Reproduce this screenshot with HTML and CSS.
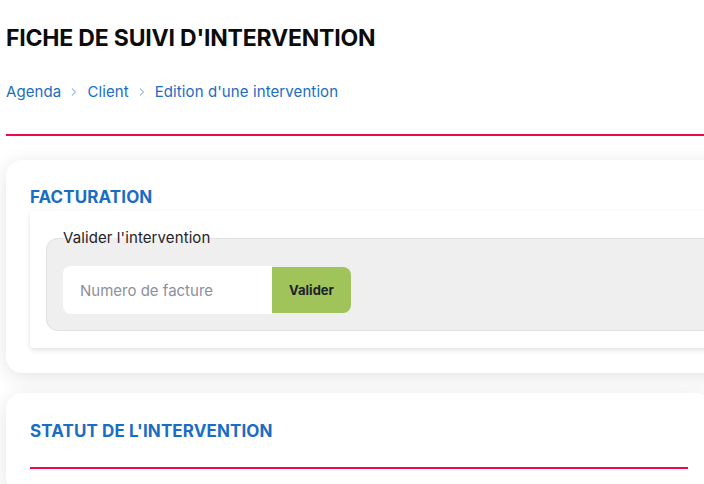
FILE: index.html
```html
<!DOCTYPE html>
<html lang="fr">
<head>
<meta charset="utf-8">
<title>Fiche de suivi d'intervention</title>
<link rel="stylesheet" href="styles.css">
</head>
<body>
<div class="page">
  <h1 class="title">FICHE DE SUIVI D'INTERVENTION</h1>
  <nav class="crumbs">
    <a class="crumb" href="#">Agenda</a>
    <span class="sep"><svg width="8" height="10" viewBox="0 0 8 10"><path d="M2 1.5 L5.5 5 L2 8.5" fill="none" stroke="#a9c4e4" stroke-width="1.3"/></svg></span>
    <a class="crumb" href="#">Client</a>
    <span class="sep"><svg width="8" height="10" viewBox="0 0 8 10"><path d="M2 1.5 L5.5 5 L2 8.5" fill="none" stroke="#a9c4e4" stroke-width="1.3"/></svg></span>
    <a class="crumb" href="#">Edition d'une intervention</a>
  </nav>
  <div class="rule"></div>

  <section class="card card-wide">
    <h2 class="card-title">FACTURATION</h2>
    <div class="panel">
      <fieldset class="group">
        <legend class="legend">Valider l'intervention</legend>
        <div class="field">
          <input class="input" type="text" placeholder="Numero de facture">
          <button class="btn" type="button">Valider</button>
        </div>
      </fieldset>
    </div>
  </section>

  <section class="card card-second">
    <h2 class="card-title">STATUT DE L'INTERVENTION</h2>
    <div class="card-rule"></div>
  </section>
</div>
</body>
</html>
```

FILE: styles.css
```css
html, body {
  margin: 0;
  padding: 0;
  background: #ffffff;
  overflow: hidden;
}
body {
  font-family: Inter, "Liberation Sans", Arial, sans-serif;
  color: #111;
}
.page {
  width: 706px;
  padding: 0 0 40px 6px;
}
.title {
  margin: 0;
  padding-top: 25px;
  font-size: 23px;
  line-height: 27px;
  font-weight: 700;
  color: #0c0c0c;
  letter-spacing: -0.2px;
}
.crumbs {
  display: flex;
  align-items: center;
  gap: 9px;
  margin-top: 30px;
  font-size: 15px;
  line-height: 20px;
  letter-spacing: 0.1px;
}
.crumb {
  color: #1a6dc4;
  text-decoration: none;
}
.sep {
  display: flex;
  align-items: center;
}
.rule {
  margin-top: 32px;
  height: 2px;
  width: 760px;
  background: #f0084e;
}
.card {
  margin-top: 24px;
  background: #fff;
  border-radius: 16px;
  box-shadow: 0 4px 20px rgba(0, 0, 0, 0.11);
  padding: 25px 24px 25px 24px;
  width: 658px;
}
.card-second {
  margin-top: 20px;
  padding-top: 26px;
}
.card-wide {
  width: 740px;
}
.card-title {
  margin: 0;
  font-size: 17px;
  line-height: 24px;
  font-weight: 700;
  color: #1a6dc4;
  letter-spacing: 0.1px;
}
.panel {
  margin-top: 2px;
  background: #fff;
  border-radius: 3px;
  box-shadow: 0 2px 5px rgba(0, 0, 0, 0.12);
  padding: 18px 16px 17px 16px;
}
.group {
  margin: 0;
  padding: 0 16px 16px 16px;
  background: #efefef;
  border: 1px solid #e1e1e1;
  border-radius: 12px;
}
.legend {
  padding: 0;
  font-size: 15px;
  line-height: 18px;
  color: #1f2329;
  letter-spacing: 0.1px;
}
.field {
  display: flex;
  align-items: center;
  margin-top: 19px;
}
.input {
  box-sizing: border-box;
  width: 209px;
  height: 48px;
  border: none;
  outline: none;
  border-radius: 8px 0 0 8px;
  background: #fff;
  padding: 0 17px;
  font-family: inherit;
  font-size: 15px;
  color: #222;
}
.input::placeholder {
  color: #8b909a;
}
.btn {
  box-sizing: border-box;
  width: 79px;
  height: 46px;
  border: none;
  border-radius: 0 8px 8px 0;
  background: #a0c35a;
  font-family: inherit;
  font-size: 13px;
  font-weight: 700;
  color: #1e2228;
  padding: 0;
}
.card-rule {
  margin-top: 24px;
  height: 2px;
  background: #f0084e;
}
```
